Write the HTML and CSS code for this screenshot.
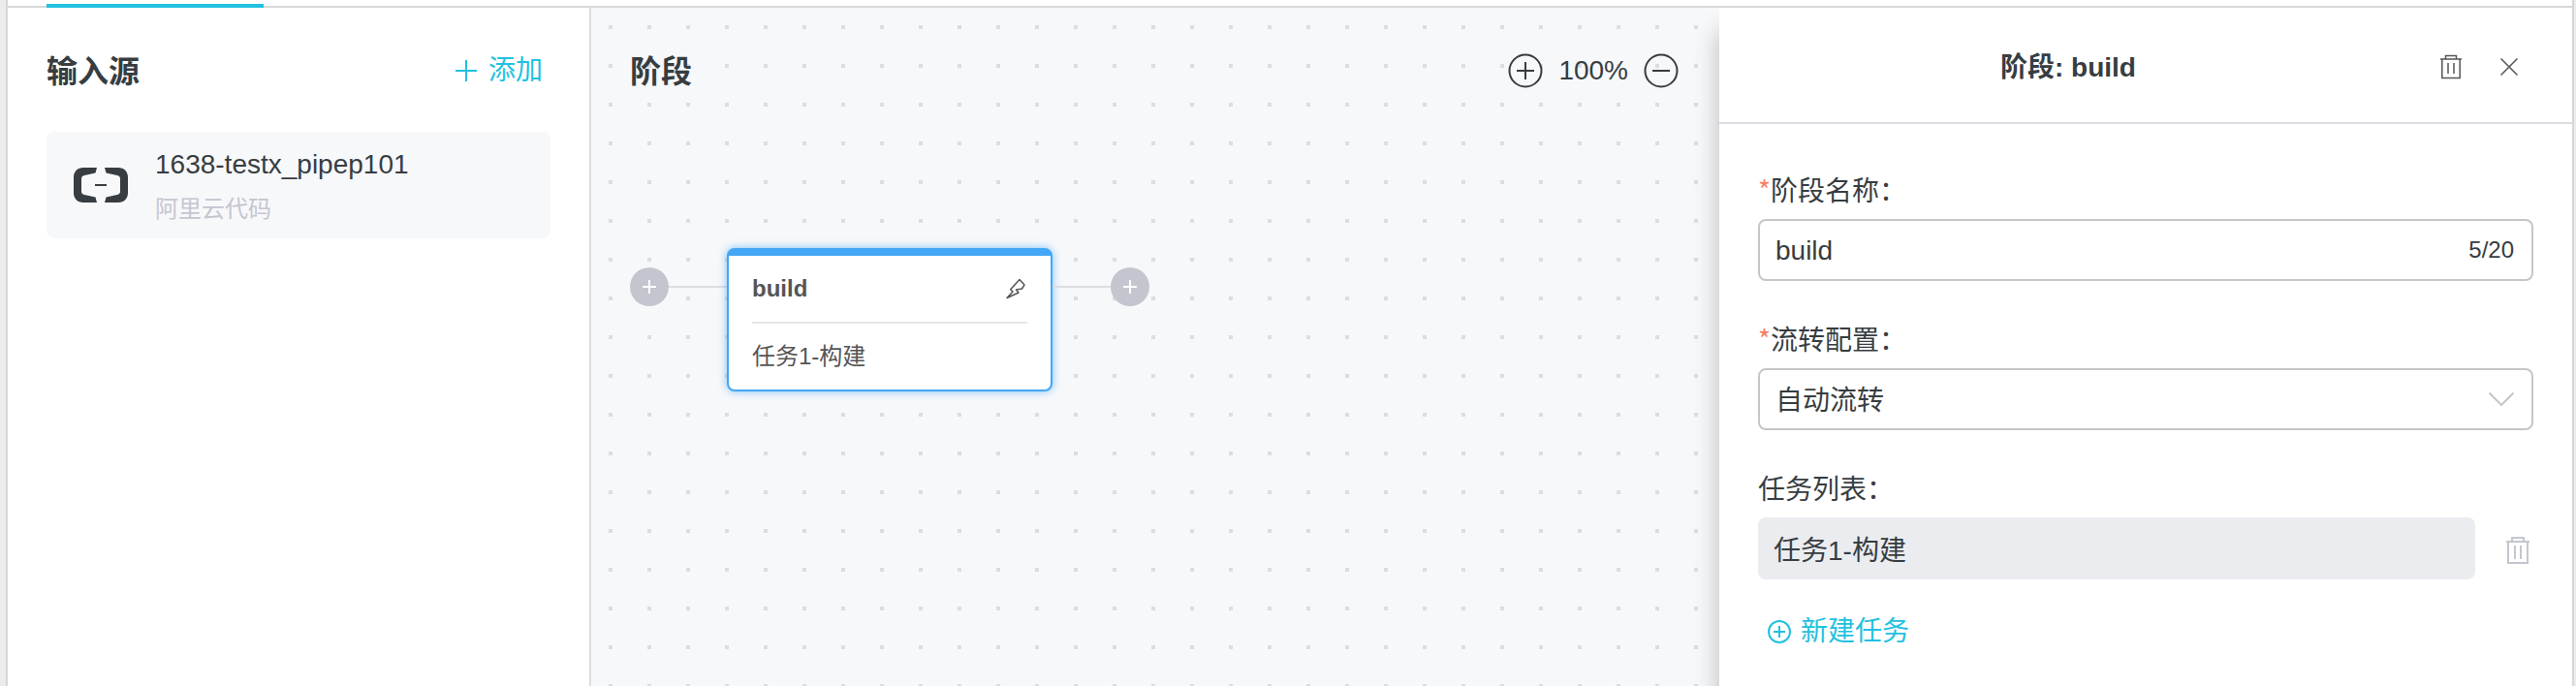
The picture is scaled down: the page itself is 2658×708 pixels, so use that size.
FILE: index.html
```html
<!DOCTYPE html>
<html lang="zh-CN">
<head>
    <meta charset="UTF-8">
    <meta name="viewport" content="width=device-width, initial-scale=1.0">
    <title>流水线编辑</title>
    <link rel="stylesheet" href="styles.css">
</head>
<body>

<div class="page">
    <div class="tab-bar">
        <div class="tab-active"></div>
    </div>

    <div class="workspace">
        <!-- Input sources -->
        <aside class="sidebar">
            <div class="section-header">
                <h2>输入源</h2>
                <button class="link-btn add-source">
                    <svg width="22" height="22" viewBox="0 0 22 22" fill="none" stroke="currentColor" stroke-width="2"><path d="M0 11h22M11 0v22"/></svg>
                    添加
                </button>
            </div>
            <div class="source-card">
                <svg width="56" height="36" viewBox="0 0 56 36" fill="#373d41">
                    <path d="M24 0H10C4 0 0 4 0 10v16c0 6 4 10 10 10h14l-1.500-5.500L11 28c-2-.4-3-1.500-3-3.500v-13C8 9.500 9 8.400 11 8l11.500-2.500z"/>
                    <path d="M32 0h14c6 0 10 4 10 10v16c0 6-4 10-10 10H32l1.500-5.500L45 28c2-.4 3-1.500 3-3.500v-13c0-2-1-3.100-3-3.500L33.500 5.500z"/>
                    <path d="M22 17h12v2H22z"/>
                </svg>
                <div>
                    <div class="source-name">1638-testx_pipep101</div>
                    <div class="source-type">阿里云代码</div>
                </div>
            </div>
        </aside>

        <!-- Stage canvas -->
        <main class="canvas">
            <div class="section-header">
                <h2>阶段</h2>
                <div class="zoom">
                    <button class="icon-btn" aria-label="放大">
                        <svg width="36" height="36" viewBox="0 0 36 36" fill="none" stroke="currentColor" stroke-width="2"><circle cx="18" cy="18" r="16.500"/><path d="M9 18h18M18 9v18"/></svg>
                    </button>
                    <span>100%</span>
                    <button class="icon-btn" aria-label="缩小">
                        <svg width="36" height="36" viewBox="0 0 36 36" fill="none" stroke="currentColor" stroke-width="2"><circle cx="18" cy="18" r="16.500"/><path d="M9 18h18"/></svg>
                    </button>
                </div>
            </div>
            <div class="pipeline">
                <div class="connector">
                    <button class="add-stage" aria-label="添加阶段">
                        <svg width="14" height="14" viewBox="0 0 14 14" fill="none" stroke="currentColor" stroke-width="2"><path d="M0 7h14M7 0v14"/></svg>
                    </button>
                    <div class="line"></div>
                </div>
                <div class="stage">
                    <div class="stage-head">
                        <strong>build</strong>
                        <svg width="24" height="22" viewBox="0 0 24 22" fill="none" stroke="currentColor" stroke-width="1.500" stroke-linejoin="round"><path d="M16 1.500L21 7l-2.500 4-6 1 2.500 3L3 20.500 9 14l-2.300-2.300z"/></svg>
                    </div>
                    <div class="stage-task">任务1-构建</div>
                </div>
                <div class="connector">
                    <div class="line"></div>
                    <button class="add-stage" aria-label="添加阶段">
                        <svg width="14" height="14" viewBox="0 0 14 14" fill="none" stroke="currentColor" stroke-width="2"><path d="M0 7h14M7 0v14"/></svg>
                    </button>
                </div>
            </div>
        </main>

        <!-- Stage settings -->
        <section class="drawer">
            <div class="drawer-header">
                <h3>阶段: build</h3>
                <div class="drawer-actions">
                    <button class="icon-btn" aria-label="删除阶段">
                        <svg width="22" height="26" viewBox="0 0 22 26" fill="none" stroke="currentColor" stroke-width="1.500"><path d="M0 5h22M5.500 5V1.500h11V5M1.800 5v19.500h18.400V5M8 9v11M14 9v11"/></svg>
                    </button>
                    <button class="icon-btn" aria-label="关闭">
                        <svg width="18" height="18" viewBox="0 0 18 18" fill="none" stroke="currentColor" stroke-width="1.500"><path d="M.5.5l17 17M17.500.5l-17 17"/></svg>
                    </button>
                </div>
            </div>
            <form class="drawer-form">
                <label for="stage-name"><span class="required">*</span>阶段名称：</label>
                <div class="field">
                    <input type="text" id="stage-name" value="build" maxlength="20">
                    <span class="count">5/20</span>
                </div>

                <label for="flow-type"><span class="required">*</span>流转配置：</label>
                <div class="field">
                    <select id="flow-type">
                        <option>自动流转</option>
                    </select>
                    <svg class="chevron" width="26" height="14" viewBox="0 0 26 14" fill="none" stroke="currentColor" stroke-width="2"><path d="M.5.5L13 13 25.500.5"/></svg>
                </div>

                <div class="list-label">任务列表：</div>
                <div class="task-row">
                    <button type="button" class="task-item">任务1-构建</button>
                    <button type="button" class="icon-btn task-delete" aria-label="删除任务">
                        <svg width="24" height="28" viewBox="0 0 24 28" fill="none" stroke="currentColor" stroke-width="2"><path d="M0 5h24M6 5V1h12v4M2 5v22h20V5M9 9v14M15 9v14"/></svg>
                    </button>
                </div>
                <button type="button" class="link-btn new-task">
                    <svg width="24" height="24" viewBox="0 0 24 24" fill="none" stroke="currentColor" stroke-width="2"><circle cx="12" cy="12" r="11"/><path d="M6 12h12M12 6v12"/></svg>
                    新建任务
                </button>
            </form>
        </section>
    </div>
</div>

</body>
</html>
```
FILE: styles.css
```css
* {
    box-sizing: border-box;
}

body {
    margin: 0;
    padding: 0 2px 0 6px;
    background-color: #ebedec;
    color: #373d41;
    font-family: "Liberation Sans", "Noto Sans CJK SC", sans-serif;
    font-size: 28px;
}

h2, h3 {
    margin: 0;
    font-weight: 600;
}

h2 {
    font-size: 32px;
    line-height: 46px;
    font-family: "Noto Sans CJK SC", sans-serif;
}

button, input, select {
    font: inherit;
    color: inherit;
    margin: 0;
}

button {
    display: flex;
    align-items: center;
    padding: 0;
    border: none;
    background: none;
    cursor: pointer;
}

svg {
    display: block;
    flex: none;
}

.page {
    display: flex;
    flex-direction: column;
    min-height: 100vh;
    background-color: #fff;
    border: solid #d6d8d8;
    border-width: 0 2px;
}

.tab-bar {
    height: 8px;
    padding: 4px 40px 0;
    border-bottom: 2px solid #d6d8d8;
}

.tab-active {
    width: 224px;
    height: 4px;
    background-color: #21c1df;
}

.workspace {
    display: flex;
    flex: 1;
    overflow: hidden;
}

.section-header {
    display: flex;
    align-items: center;
    justify-content: space-between;
    height: 50px;
}

.section-header h2 {
    align-self: flex-start;
}

.link-btn {
    gap: 12px;
    line-height: 40px;
    color: #21c1df;
}

/* Sidebar */
.sidebar {
    flex: 0 0 602px;
    padding: 40px;
    border-right: 2px solid #dcdde3;
}

.add-source {
    margin-right: 8px;
}

.source-card {
    display: flex;
    align-items: center;
    gap: 28px;
    margin-top: 38px;
    padding: 14px 28px;
    border-radius: 8px;
    background-color: #f7f8fa;
}

.source-name {
    line-height: 40px;
}

.source-type {
    margin-top: 10px;
    font-size: 24px;
    line-height: 32px;
    color: #c4c6cf;
}

/* Canvas */
.canvas {
    flex: 1;
    padding: 40px;
    background-color: #f7f8fa;
    background-image: conic-gradient(at 4px 4px, transparent 75%, #dcdde3 0);
    background-size: 40px 40px;
    background-position: 18px 18px;
}

.zoom {
    display: flex;
    align-items: center;
    gap: 16px;
    margin-right: 2px;
}

.pipeline {
    display: flex;
    align-items: flex-start;
    margin-top: 158px;
}

.connector {
    display: flex;
    align-items: center;
    margin-top: 20px;
}

.line {
    width: 60px;
    height: 2px;
    background-color: #dcdde3;
}

.add-stage {
    justify-content: center;
    width: 40px;
    height: 40px;
    border-radius: 50%;
    background-color: #c4c6cf;
    color: #fff;
}

.stage {
    width: 336px;
    padding: 0 24px;
    border: 2px solid #44a7f5;
    border-top-width: 8px;
    border-radius: 8px;
    background-color: #fff;
    box-shadow: 0 0 8px rgba(68, 167, 245, 0.7);
    color: #555;
    font-size: 24px;
    line-height: 68px;
}

.stage-head {
    display: flex;
    align-items: center;
    justify-content: space-between;
    border-bottom: 2px solid #e6e7eb;
}

/* Drawer */
.drawer {
    flex: 0 0 880px;
    background-color: #fff;
    box-shadow: 0 24px 24px rgba(0, 0, 0, 0.25);
}

.drawer-header {
    display: flex;
    align-items: center;
    height: 120px;
    border-bottom: 2px solid #dcdde3;
}

.drawer-header h3 {
    flex: 1;
    font-size: 28px;
    text-align: center;
}

.drawer-actions {
    display: flex;
    align-items: center;
    gap: 40px;
    width: 160px;
    padding: 4px 0 0 24px;
    color: #555;
}

.drawer-form {
    padding: 48px 40px;
}

.drawer-form label, .list-label {
    display: block;
    height: 44px;
    margin-bottom: 6px;
    line-height: 44px;
}

.required {
    font-family: "Noto Sans CJK SC", sans-serif;
    line-height: 1;
    color: #f68065;
}

.field {
    display: flex;
    align-items: center;
    height: 64px;
    margin-bottom: 40px;
    padding-right: 18px;
    border: 2px solid #c4c6c8;
    border-radius: 8px;
}

.field input, .field select {
    flex: 1;
    min-width: 0;
    height: 60px;
    padding: 2px 16px 0;
    border: none;
    outline: none;
    background: none;
    appearance: none;
}

.count {
    font-size: 24px;
}

.chevron {
    color: #c4c6c8;
}

.task-row {
    display: flex;
    align-items: center;
    gap: 32px;
}

.task-item {
    flex: 1;
    height: 64px;
    padding: 0 16px;
    border-radius: 8px;
    background-color: #ebecf0;
}

.task-delete {
    margin: 4px 4px 0 0;
    color: #c4c6cf;
}

.new-task {
    gap: 10px;
    margin: 34px 0 0 10px;
}
```
